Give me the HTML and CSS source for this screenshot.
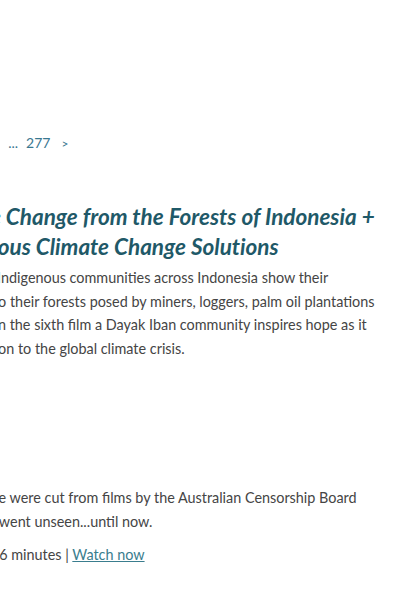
FILE: index.html
```html
<!DOCTYPE html>
<html lang="en">
<head>
<meta charset="utf-8">
<title>Films</title>
<link rel="stylesheet" href="styles.css">
</head>
<body>
<main class="listing">
  <nav class="pager">
    <a href="#">1</a><a href="#">2</a><a href="#">3</a><a href="#">4</a><a href="#">5</a><span class="dots">...</span><a href="#">277</a><a href="#" class="next">&gt;</a>
  </nav>

  <article class="item">
    <h2 class="item-title"><a href="#">Climate Change from the Forests of Indonesia +<br>Indigenous Climate Change Solutions</a></h2>
    <p class="item-text">In six films Indigenous communities across Indonesia show their<br>all threats to their forests posed by miners, loggers, palm oil plantations<br>and more. In the sixth film a Dayak Iban community inspires hope as it<br>has a solution to the global climate crisis.</p>
  </article>

  <article class="item item-second">
    <h2 class="item-title"><a href="#">Cut!</a></h2>
    <p class="item-text">Real footage were cut from films by the Australian Censorship Board<br>and largely went unseen...until now.</p>
    <p class="item-meta">Duration: 56 minutes | <a href="#">Watch now</a></p>
  </article>
</main>
</body>
</html>
```

FILE: styles.css
```css
html, body {
  margin: 0;
  padding: 0;
  background: #ffffff;
  overflow: hidden;
}

body {
  font-family: Lato, "Open Sans", sans-serif;
  color: #454545;
}

.listing {
  margin-left: -72.5px;
  padding-top: 133px;
  width: 520px;
}

.pager {
  display: flex;
  align-items: baseline;
  gap: 8px;
  font-size: 14px;
  line-height: 20px;
}

.pager a {
  color: #3a7891;
  text-decoration: none;
}

.pager .dots {
  color: #3a7891;
}

.pager .next {
  font-size: 12px;
  margin-left: 3px;
}

.item-title {
  margin: 48px 0 4px;
  font-size: 22.5px;
  line-height: 30px;
  font-weight: 700;
  font-style: italic;
  font-variant-ligatures: no-common-ligatures;
}

.item-title a {
  color: #1f5968;
  text-decoration: none;
}

.item-text {
  margin: 0;
  font-size: 14.4px;
  line-height: 23.6px;
  white-space: nowrap;
}

.item-second .item-title {
  margin-top: 92px;
}

.item-meta {
  margin: 9px 0 0;
  font-size: 14.4px;
  line-height: 23.6px;
}

.item-meta a {
  color: #3a7d8e;
  text-decoration: underline;
}
```
